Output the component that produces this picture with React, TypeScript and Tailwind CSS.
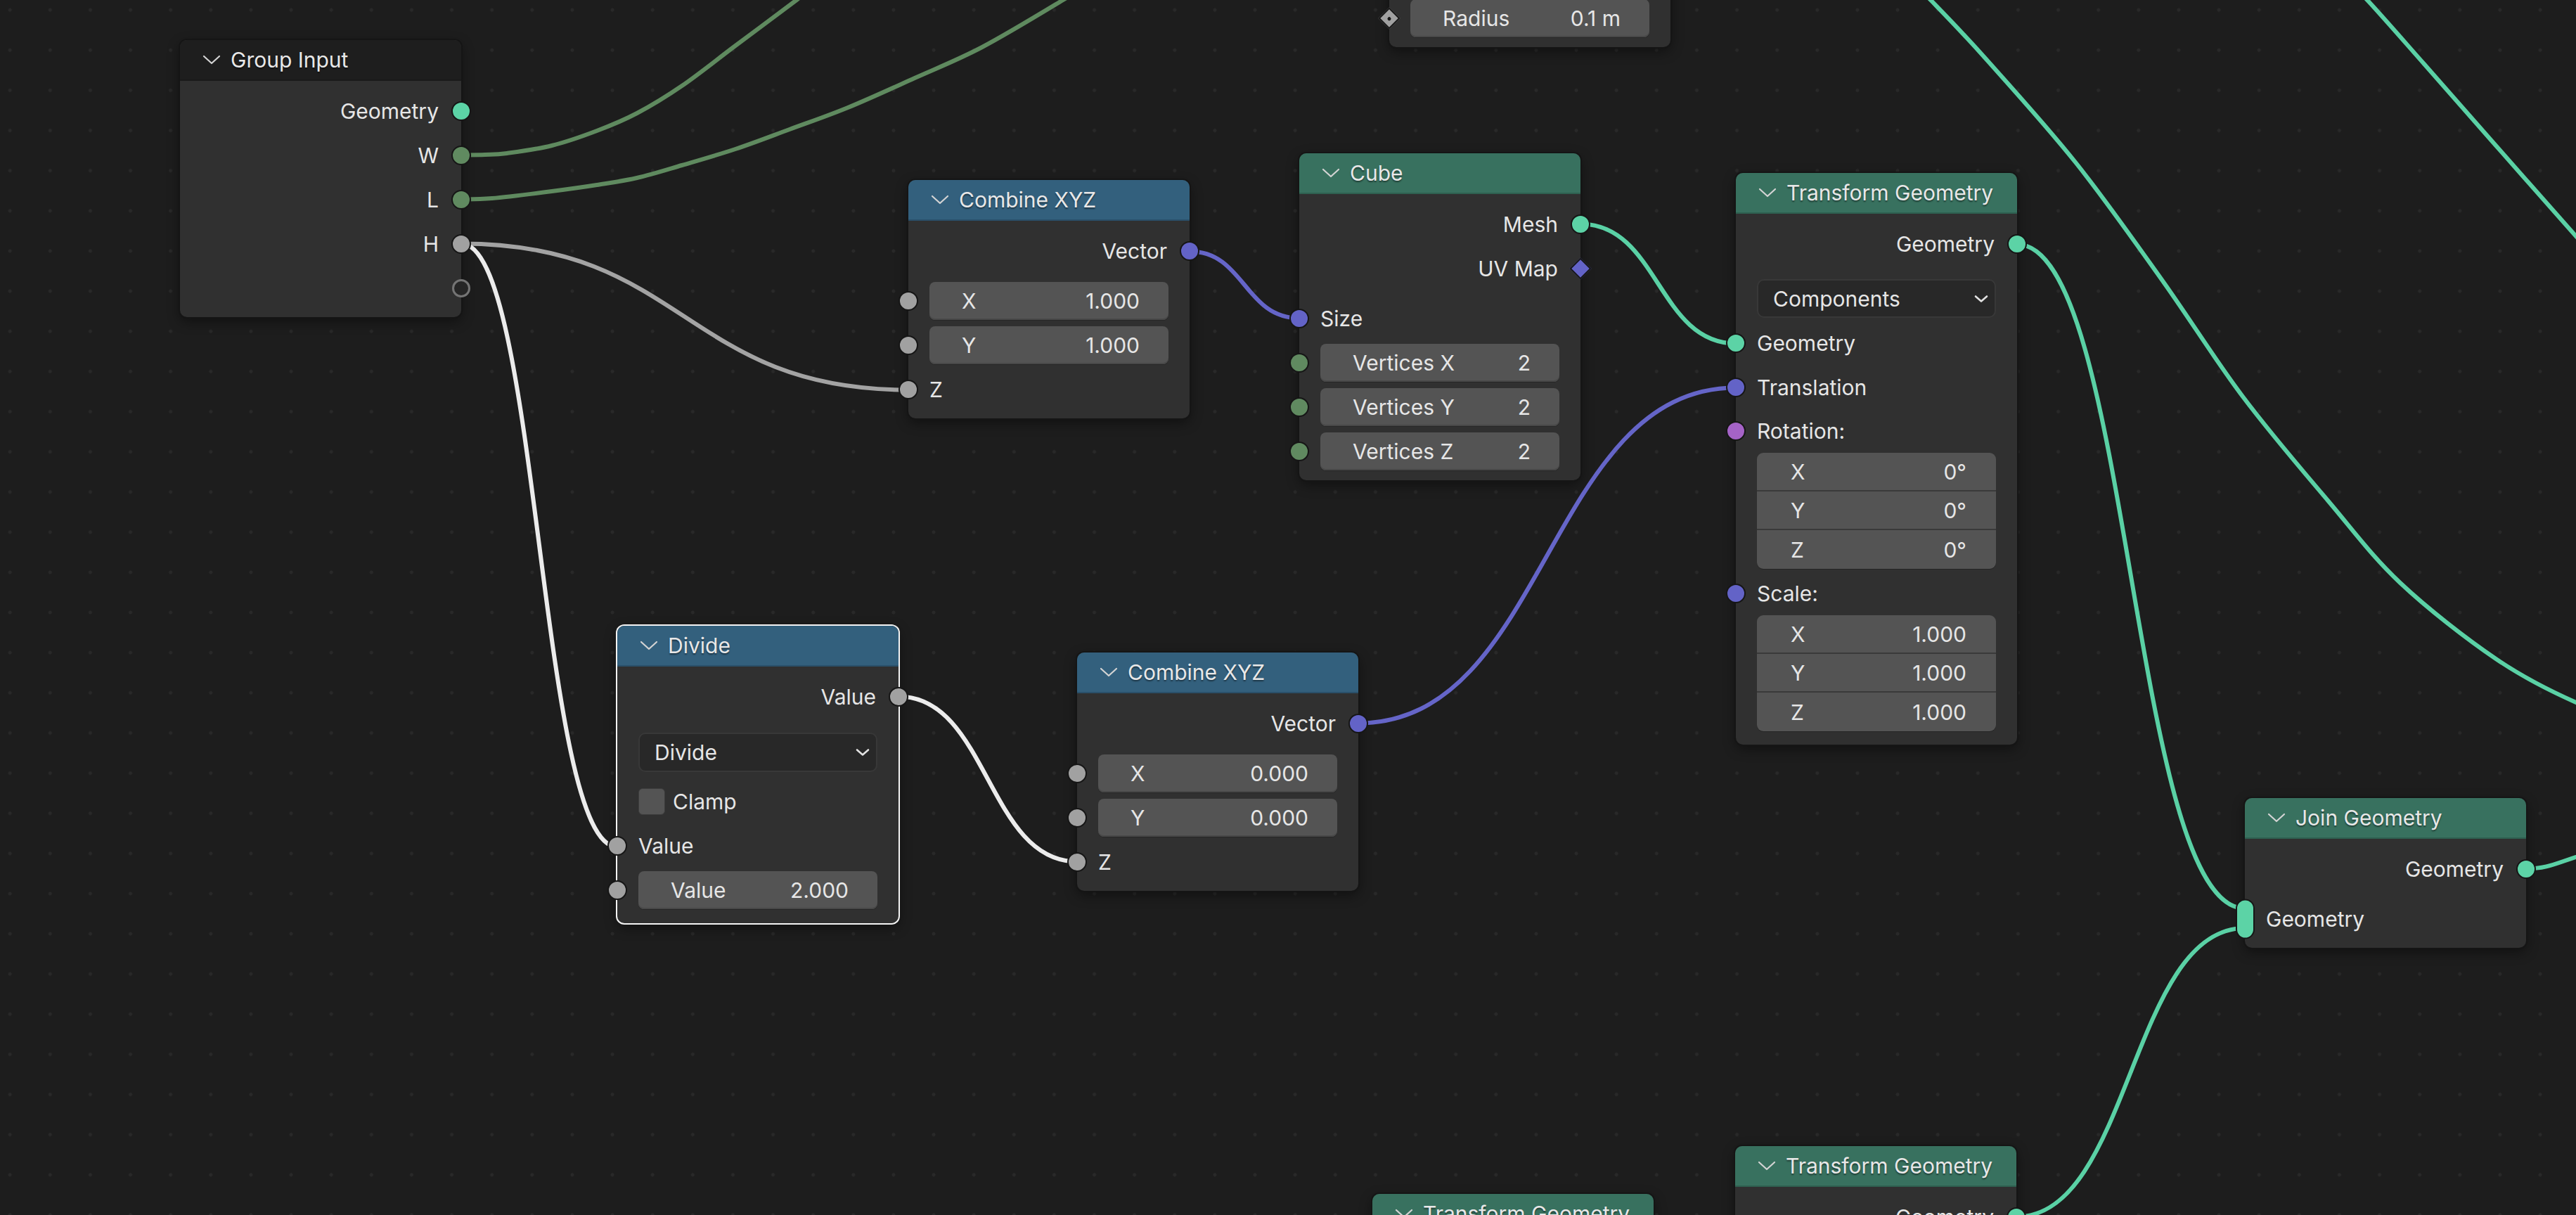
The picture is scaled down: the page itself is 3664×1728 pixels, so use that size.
import React from "react";

type Pt = [number, number];

const GEO = "bg-[#5cd3a6]";
const INT = "bg-[#608a60]";
const FLT = "bg-[#a1a1a1]";
const VEC = "bg-[#6363c7]";
const ROT = "bg-[#a563c7]";

const HEAD_DARK = "bg-[#1e1e1e] border-[#1a1a1a]";
const HEAD_BLUE = "bg-[#33607d] border-[#2a506a]";
const HEAD_GREEN = "bg-[#38715f] border-[#2e6050]";

function link(x0: number, y0: number, x1: number, y1: number) {
  const d = Math.abs(x1 - x0) * 0.5;
  return `M${x0},${y0} C${x0 + d},${y0} ${x1 - d},${y1} ${x1},${y1}`;
}

function smooth(pts: Pt[]) {
  let d = `M${pts[0][0]},${pts[0][1]}`;
  for (let i = 0; i < pts.length - 1; i++) {
    const p0 = pts[i - 1] || pts[i];
    const p1 = pts[i];
    const p2 = pts[i + 1];
    const p3 = pts[i + 2] || p2;
    const c1x = p1[0] + (p2[0] - p0[0]) / 6;
    const c1y = p1[1] + (p2[1] - p0[1]) / 6;
    const c2x = p2[0] - (p3[0] - p1[0]) / 6;
    const c2y = p2[1] - (p3[1] - p1[1]) / 6;
    d += ` C${c1x},${c1y} ${c2x},${c2y} ${p2[0]},${p2[1]}`;
  }
  return d;
}

function Chevron() {
  return (
    <svg width="26" height="16" viewBox="0 0 26 16" className="shrink-0">
      <path d="M2 3 L13 13 L24 3" fill="none" stroke="#d4d4d4" strokeWidth="2.2" strokeLinecap="round" strokeLinejoin="round" />
    </svg>
  );
}

function SmallChevron() {
  return (
    <svg width="20" height="12" viewBox="0 0 20 12" className="shrink-0">
      <path d="M2 2.5 L10 9.5 L18 2.5" fill="none" stroke="#e2e2e2" strokeWidth="2.6" strokeLinecap="round" strokeLinejoin="round" />
    </svg>
  );
}

function Socket({ side, color }: { side: "l" | "r"; color: string }) {
  return (
    <span
      className={`absolute top-1/2 -translate-y-1/2 w-[28px] h-[28px] rounded-full border-2 border-[#161616] ${color} ${
        side === "l" ? "left-[-14px]" : "right-[-14px]"
      }`}
    />
  );
}

function Out({ label, color }: { label: string; color: string }) {
  return (
    <div className="relative h-[63px] flex items-center justify-end pr-[32px]">
      <span>{label}</span>
      <Socket side="r" color={color} />
    </div>
  );
}

function In({ label, color, h = "h-[63px]" }: { label: string; color: string; h?: string }) {
  return (
    <div className={`relative ${h} flex items-center pl-[30px]`}>
      <Socket side="l" color={color} />
      <span>{label}</span>
    </div>
  );
}

function FieldIn({ label, value, color }: { label: string; value: string; color: string }) {
  return (
    <div className="relative h-[63px] flex items-center px-[30px]">
      <Socket side="l" color={color} />
      <div className="flex-1 h-[54px] rounded-[8px] bg-[#545454] shadow-[inset_0_-2px_0_#484848,0_1px_0_#262626] flex items-center justify-between pl-[46px] pr-[41px]">
        <span>{label}</span>
        <span>{value}</span>
      </div>
    </div>
  );
}

function VecGroup({ vals }: { vals: [string, string][] }) {
  return (
    <div className="mx-[30px] rounded-[9px] overflow-hidden bg-[#545454] shadow-[0_1px_0_#262626] flex flex-col divide-y-2 divide-[#3a3a3a]">
      {vals.map(([l, v]) => (
        <div key={l} className="h-[55px] flex items-center justify-between pl-[48px] pr-[42px]">
          <span>{l}</span>
          <span>{v}</span>
        </div>
      ))}
    </div>
  );
}

function Dropdown({ label, cls }: { label: string; cls: string }) {
  return (
    <div className={`mx-[30px] rounded-[10px] bg-[#282828] border-2 border-[#383838] flex items-center justify-between pl-[21px] pr-[9px] ${cls}`}>
      <span>{label}</span>
      <SmallChevron />
    </div>
  );
}

function Node({
  pos,
  title,
  head,
  selected = false,
  body = "pt-[11px] pb-[10px]",
  children,
}: {
  pos: string;
  title: string;
  head: string;
  selected?: boolean;
  body?: string;
  children: React.ReactNode;
}) {
  return (
    <div
      className={`absolute w-[400px] rounded-[10px] bg-[#303030] ${
        selected
          ? "shadow-[0_0_0_2px_#f4f4f4,0_6px_18px_rgba(0,0,0,0.45)]"
          : "shadow-[0_0_0_2px_#151515,0_6px_18px_rgba(0,0,0,0.45)]"
      } ${pos}`}
    >
      <div className={`h-[58px] rounded-t-[10px] flex items-center pl-[32px] border-b-2 ${head}`}>
        <Chevron />
        <span className="ml-[14px] text-[#e8e8e8] [text-shadow:0_2px_2px_rgba(0,0,0,0.45)]">{title}</span>
      </div>
      <div className={body}>{children}</div>
    </div>
  );
}

function TransformGeometry({ pos }: { pos: string }) {
  return (
    <Node pos={pos} title="Transform Geometry" head={HEAD_GREEN} body="pt-[11px] pb-[19px]">
      <Out label="Geometry" color={GEO} />
      <Dropdown label="Components" cls="mt-[19px] h-[55px]" />
      <div className="mt-[4px]">
        <In label="Geometry" color={GEO} />
        <In label="Translation" color={VEC} />
        <In label="Rotation:" color={ROT} h="h-[62px]" />
        <VecGroup vals={[["X", "0°"], ["Y", "0°"], ["Z", "0°"]]} />
        <div className="mt-[4px]">
          <In label="Scale:" color={VEC} h="h-[62px]" />
        </div>
        <VecGroup vals={[["X", "1.000"], ["Y", "1.000"], ["Z", "1.000"]]} />
      </div>
    </Node>
  );
}

function Wires() {
  const green = "#5f8a5f";
  const teal = "#5ad1a5";
  const vec = "#6565c8";
  const grey = "#a3a3a3";
  const white = "#ececec";
  const w = 6;
  const wires: [string, string][] = [
    [
      smooth([
        [656, 220.5],
        [690, 220],
        [721, 218],
        [785, 207],
        [849, 186],
        [906, 161],
        [970, 122],
        [1046, 65],
        [1133, 0],
        [1160, -22],
      ]),
      green,
    ],
    [
      smooth([
        [656, 283.5],
        [700, 282],
        [785, 272],
        [849, 263],
        [906, 253],
        [970, 235],
        [1046, 212],
        [1123, 184],
        [1206, 153],
        [1301, 111],
        [1397, 67],
        [1512, 0],
        [1545, -22],
      ]),
      green,
    ],
    [link(656, 346.5, 1292, 554.5), grey],
    [link(1692, 357.5, 1848, 452.5), vec],
    [link(2248, 318.5, 2469, 488.5), teal],
    [link(1932, 1028.5, 2469, 551.5), vec],
    [link(2869, 347.5, 3193, 1292), teal],
    [link(2868, 1730.5, 3193, 1320), teal],
    ["M3593,1235.5 C3630,1235.5 3640,1224 3700,1208", teal],
    [
      smooth([
        [2700, -45],
        [2746, 0],
        [2824, 83],
        [2953, 232],
        [3075, 398],
        [3190, 564],
        [3312, 713],
        [3414, 829],
        [3550, 937],
        [3664, 999],
        [3760, 1030],
      ]),
      teal,
    ],
    [
      smooth([
        [3330, -35],
        [3367, 0],
        [3448, 91],
        [3550, 207],
        [3664, 336],
        [3700, 375],
      ]),
      teal,
    ],
    [link(656, 346.5, 878, 1204.5), white],
    [link(1278, 990.5, 1532, 1225.5), white],
  ];
  return (
    <svg className="absolute inset-0" width="3664" height="1728" viewBox="0 0 3664 1728">
      {wires.map(([d, c], i) => (
        <path key={i} d={d} fill="none" stroke={c} strokeWidth={w} strokeLinecap="round" />
      ))}
    </svg>
  );
}

export default function App() {
  return (
    <div className="relative w-[3664px] h-[1728px] overflow-hidden bg-[#1d1d1d] bg-[radial-gradient(circle,#292929_2.2px,transparent_2.8px)] bg-[length:57.13px_57.13px] bg-[position:-14.4px_-14.4px] font-['Inter',sans-serif] text-[30px] leading-none text-[#e6e6e6]">
      <Wires />

      {/* Partial node at top (Radius) */}
      <div className="absolute left-[1976px] top-[-70px] w-[400px] h-[137px] rounded-[10px] bg-[#303030] shadow-[0_0_0_2px_#151515,0_6px_18px_rgba(0,0,0,0.45)] flex flex-col justify-end pb-[10px]">
        <div className="relative h-[63px] flex items-center px-[30px]">
          <span className="absolute left-[-11px] top-1/2 -translate-y-1/2 rotate-45 w-[22px] h-[22px] bg-[#a1a1a1] border-2 border-[#161616] flex items-center justify-center">
            <span className="w-[5px] h-[5px] rounded-full bg-[#161616]" />
          </span>
          <div className="flex-1 h-[54px] rounded-[8px] bg-[#545454] shadow-[inset_0_-2px_0_#484848,0_1px_0_#262626] flex items-center justify-between pl-[46px] pr-[41px]">
            <span>Radius</span>
            <span>0.1 m</span>
          </div>
        </div>
      </div>

      {/* Group Input */}
      <Node pos="left-[256px] top-[57px]" title="Group Input" head={HEAD_DARK}>
        <Out label="Geometry" color={GEO} />
        <Out label="W" color={INT} />
        <Out label="L" color={INT} />
        <Out label="H" color={FLT} />
        <div className="relative h-[63px]">
          <span className="absolute right-[-13px] top-1/2 -translate-y-1/2 w-[26px] h-[26px] rounded-full border-[3px] border-[#747474] bg-[#262626]" />
        </div>
      </Node>

      {/* Combine XYZ (top) */}
      <Node pos="left-[1292px] top-[256px]" title="Combine XYZ" head={HEAD_BLUE}>
        <Out label="Vector" color={VEC} />
        <div className="h-[8px]" />
        <FieldIn label="X" value="1.000" color={FLT} />
        <FieldIn label="Y" value="1.000" color={FLT} />
        <In label="Z" color={FLT} />
      </Node>

      {/* Cube */}
      <Node pos="left-[1848px] top-[218px]" title="Cube" head={HEAD_GREEN}>
        <Out label="Mesh" color={GEO} />
        <div className="relative h-[63px] flex items-center justify-end pr-[32px]">
          <span>UV Map</span>
          <span className="absolute right-[-11px] top-1/2 -translate-y-1/2 rotate-45 w-[22px] h-[22px] bg-[#6363c7] border-2 border-[#161616]" />
        </div>
        <div className="h-[8px]" />
        <In label="Size" color={VEC} />
        <FieldIn label="Vertices X" value="2" color={INT} />
        <FieldIn label="Vertices Y" value="2" color={INT} />
        <FieldIn label="Vertices Z" value="2" color={INT} />
      </Node>

      {/* Transform Geometry */}
      <TransformGeometry pos="left-[2469px] top-[246px]" />

      {/* Divide (selected) */}
      <Node pos="left-[878px] top-[890px]" title="Divide" head={HEAD_BLUE} selected body="pt-[11px] pb-[16px]">
        <Out label="Value" color={FLT} />
        <Dropdown label="Divide" cls="mt-[20px] h-[56px]" />
        <div className="mt-[10px] h-[63px] flex items-center pl-[30px]">
          <span className="w-[38px] h-[38px] rounded-[6px] bg-[#545454] border border-[#3c3c3c]" />
          <span className="ml-[11px]">Clamp</span>
        </div>
        <In label="Value" color={FLT} />
        <FieldIn label="Value" value="2.000" color={FLT} />
      </Node>

      {/* Combine XYZ (bottom) */}
      <Node pos="left-[1532px] top-[928px]" title="Combine XYZ" head={HEAD_BLUE}>
        <Out label="Vector" color={VEC} />
        <div className="h-[8px]" />
        <FieldIn label="X" value="0.000" color={FLT} />
        <FieldIn label="Y" value="0.000" color={FLT} />
        <In label="Z" color={FLT} />
      </Node>

      {/* Join Geometry */}
      <Node pos="left-[3193px] top-[1135px]" title="Join Geometry" head={HEAD_GREEN}>
        <Out label="Geometry" color={GEO} />
        <div className="h-[8px]" />
        <div className="relative h-[63px] flex items-center pl-[30px]">
          <span className="absolute left-[-13px] top-1/2 -translate-y-1/2 w-[27px] h-[57px] rounded-full bg-[#5cd3a6] border-2 border-[#161616]" />
          <span>Geometry</span>
        </div>
      </Node>

      {/* Bottom partial nodes */}
      <TransformGeometry pos="left-[1952px] top-[1698px]" />
      <TransformGeometry pos="left-[2468px] top-[1630px]" />
    </div>
  );
}
